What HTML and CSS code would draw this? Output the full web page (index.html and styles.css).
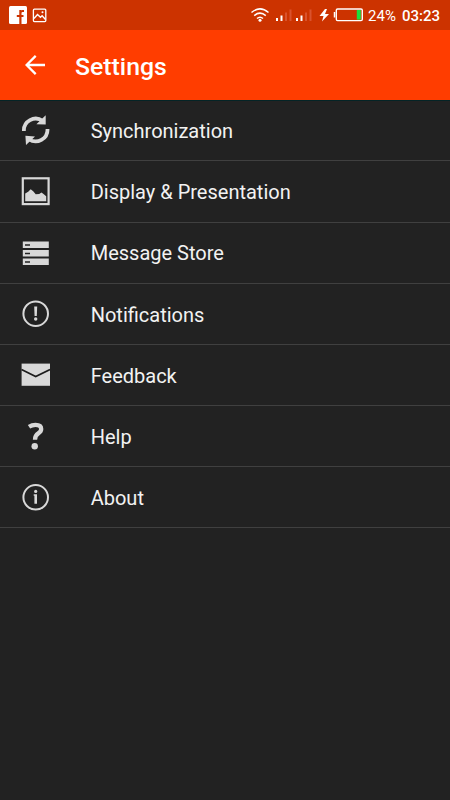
FILE: index.html
```html
<!DOCTYPE html>
<html lang="en">
<head>
<meta charset="utf-8">
<title>Settings</title>
<link rel="stylesheet" href="styles.css">
</head>
<body>
<div class="status">
  <svg class="notices" width="40" height="20" viewBox="8 5 40 20">
    <rect x="9" y="6" width="18" height="18" rx="1.5" fill="#fff"/>
    <path d="M20.2 24v-14M24 11h-1.4q-2 0-2 2v11M16.8 16h6.7" fill="none" stroke="#c30" stroke-width="1.8"/>
    <rect x="33.4" y="9.200" width="12.4" height="12.4" rx="1" fill="none" stroke="#fff" stroke-width="1.3"/>
    <path d="M34 18.500l3.500-4 3 2.700 1.600-1.400 3.400 3.600" fill="none" stroke="#fff" stroke-width="1.400"/>
    <circle cx="42.500" cy="12.300" r="1" fill="#fff"/>
  </svg>
  <svg class="signals" width="114" height="20" viewBox="250 5 114 20">
    <g fill="none" stroke="#fff" stroke-width="1.5">
      <path d="M251.500 12.500q8.500-7.200 17 0M254.200 15.600q5.800-5 11.600 0M257 18.500q3-2.600 6 0"/>
    </g>
    <circle cx="260" cy="20.300" r="1.500" fill="#fff"/>
    <path d="M276 18h2v3h-2zM280.500 15.500h2v5.500h-2zM296 18h2v3h-2zM300.500 15.500h2v5.500h-2z" fill="#fff"/>
    <path d="M285 12.500h2v8.500h-2zM289.500 9.500h2v11.500h-2zM305 12.500h2v8.500h-2zM309.500 9.500h2v11.500h-2z" fill="#d9532e"/>
    <path d="M325 9l-5.500 7h4l-1.500 5.500 7-7.500h-4l2-5z" fill="#fff"/>
    <rect x="336.300" y="9" width="26" height="11.600" rx="1.300" fill="none" stroke="#fff" stroke-width="1.400"/>
    <path d="M334.500 12v5.500" stroke="#fff" stroke-width="1.500"/>
    <rect x="356.800" y="10" width="4" height="9.600" fill="#1be03c"/>
  </svg>
  <span class="percent">24%</span>
  <span class="clock">03:23</span>
</div>
<header class="bar">
  <svg width="20" height="20" viewBox="0 0 20 20"><path d="M20 10H2M10.700.900L1.600 10l9.100 9.100" fill="none" stroke="#fff" stroke-width="2.300"/></svg>
  <h1>Settings</h1>
</header>
<main class="list">
  <div class="row">
    <svg class="icon" viewBox="0 0 30 30">
      <g fill="none" stroke="#d8d8d8" stroke-width="3.800"><path d="M3.900 16A11.800 11.800 0 0 1 22.500 5.800M27.500 14A11.800 11.800 0 0 1 9 24.200"/></g>
      <path d="M25.700.200V9.600L16.400 9.200zM5.400 20.700L15 21.400 6 30z" fill="#d8d8d8"/>
    </svg>
    <span>Synchronization</span>
  </div>
  <div class="row">
    <svg class="icon" viewBox="0 0 30 30">
      <rect x="2.800" y="2.300" width="25.800" height="25.800" fill="#222" stroke="#d8d8d8" stroke-width="2.200"/>
      <path d="M5.200 25.200v-7.700l3-1.700 2.500-2.500 2.500 2 2.500 3 3.500-.3 2.300-1.500 2 1.600 2.700 2.200v4.900z" fill="#d8d8d8"/>
    </svg>
    <span>Display &amp; Presentation</span>
  </div>
  <div class="row">
    <svg class="icon" viewBox="0 0 30 30">
      <path d="M2.800 3.500h26v6.500h-26zM2.800 12h26v6.500h-26zM2.800 20.500h26v6.500h-26z" fill="#d8d8d8"/>
      <path d="M5 7h5M5 15.500h5M5 24h5" stroke="#222" stroke-width="1.700"/>
    </svg>
    <span>Message Store</span>
  </div>
  <div class="row">
    <svg class="icon" viewBox="0 0 30 30">
      <circle cx="15.700" cy="14.700" r="12.300" fill="none" stroke="#d8d8d8" stroke-width="2"/>
      <path d="M14.200 7.400h3l-.4 9.600h-2.200z" fill="#d8d8d8"/><circle cx="15.700" cy="20" r="1.700" fill="#d8d8d8"/>
    </svg>
    <span>Notifications</span>
  </div>
  <div class="row">
    <svg class="icon" viewBox="0 0 30 30">
      <path d="M1.600 3.600h28.400v22.200H1.600z" fill="#d8d8d8"/>
      <path d="M1.500 9.500l14.200 7 14.300-7" fill="none" stroke="#1b1b1b" stroke-width="1.600"/>
    </svg>
    <span>Feedback</span>
  </div>
  <div class="row">
    <svg class="icon" viewBox="0 0 30 30">
      <path d="M9 5.700Q12 3.800 15.500 3.800Q21.200 3.800 21.200 8Q21.200 10.500 18.300 12.400Q15 14.500 15 18.700" fill="none" stroke="#d8d8d8" stroke-width="4.300"/>
      <circle cx="14.700" cy="25.300" r="3.200" fill="#d8d8d8"/>
    </svg>
    <span>Help</span>
  </div>
  <div class="row">
    <svg class="icon" viewBox="0 0 30 30">
      <circle cx="15.700" cy="15.300" r="12.300" fill="none" stroke="#d8d8d8" stroke-width="2"/>
      <circle cx="15.700" cy="9.400" r="1.600" fill="#d8d8d8"/>
      <path d="M13.700 12.300h3.300v9.500h-2.600v-8h-.7z" fill="#d8d8d8"/>
    </svg>
    <span>About</span>
  </div>
</main>
</body>
</html>
```

FILE: styles.css
```css
* { box-sizing: border-box; }
body {
  margin: 0;
  min-height: 800px;
  background: #222;
  color: #f2f2f2;
  font-family: Roboto, sans-serif;
}
svg { display: block; flex: none; }
.status {
  display: flex;
  align-items: center;
  height: 30px;
  padding: 0 10px 0 8px;
  background: #c30;
  color: #fff;
  font-size: 15px;
}
.signals { margin-left: auto; margin-right: 4px; }
.percent, .clock { padding-top: 2px; }
.percent { margin-right: 6px; }
.clock { font-weight: 500; }
.bar {
  display: flex;
  align-items: center;
  height: 70px;
  padding-left: 25px;
  background: #ff3d00;
  color: #fff;
}
.bar h1 {
  margin: 3px 0 0 30px;
  font-size: 24.8px;
  font-weight: 500;
  line-height: 30px;
}
.list {
  padding-top: 0.15px;
  box-shadow: inset 0 1px #042426;
}
.row {
  display: flex;
  align-items: center;
  height: 61.2px;
  padding-left: 20px;
  border-bottom: 1px solid #404040;
  font-size: 20px;
}
.row span { padding-top: 1.6px; }
.icon { width: 30px; height: 30px; margin-right: 40.7px; }
```
